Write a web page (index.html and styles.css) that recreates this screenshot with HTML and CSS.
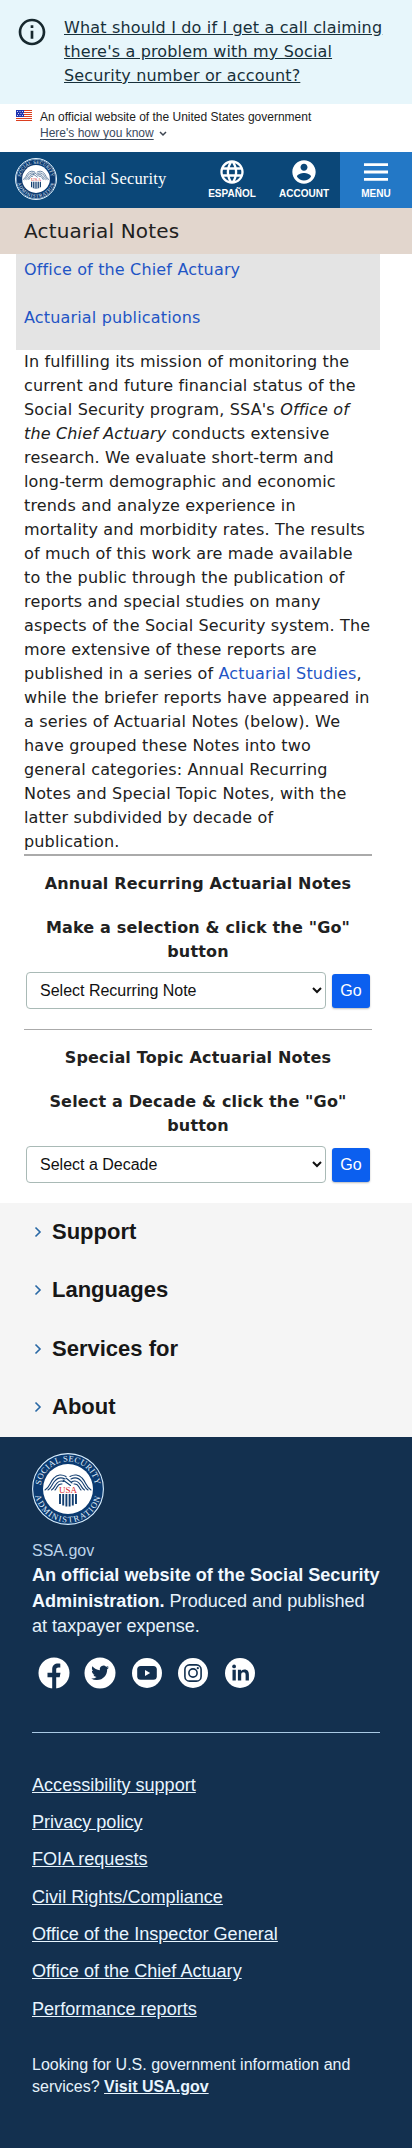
FILE: index.html
```html
<!DOCTYPE html>
<html lang="en">
<head>
<meta charset="utf-8">
<meta name="viewport" content="width=device-width, initial-scale=1">
<title>Actuarial Notes</title>
<link rel="stylesheet" href="styles.css">
</head>
<body>
<svg class="defs" width="0" height="0" aria-hidden="true">
  <defs>
    <path id="arc-top" d="M8.500 36a27.500 27.500 0 0 1 55 0"/>
    <path id="arc-bottom" d="M2.600 36a33.400 33.400 0 0 0 66.800 0"/>
    <symbol id="seal" viewBox="0 0 72 72">
      <circle cx="36" cy="36" r="35.400" fill="#0b3a70" stroke="#d9efff" stroke-width="1.100"/>
      <circle cx="36" cy="36" r="25" fill="#fff"/>
      <text class="seal-ring"><textPath href="#arc-top" startOffset="50%" text-anchor="middle">SOCIAL SECURITY</textPath></text>
      <text class="seal-ring seal-ring-bottom"><textPath href="#arc-bottom" startOffset="50%" text-anchor="middle">ADMINISTRATION</textPath></text>
      <g fill="none" stroke="#123e70" stroke-width="1.100" stroke-linecap="round">
        <path d="M34 23.500c-4-2.500-9-2-12 1.500-4 4-4 9-9 12M33 26c-4-2-8-1-11 3-3 4-2.500 6-6 8M32 28.500c-4-1.500-6 0-8.500 3.500-1.500 2.500-2 4-4 5M30 31c-3-.5-4 1-5 3-.5 1-1 2-2 3"/>
        <path d="M38 23.500c4-2.500 9-2 12 1.500 4 4 4 9 9 12M39 26c4-2 8-1 11 3 3 4 2.500 6 6 8M40 28.500c4-1.500 6 0 8.500 3.500 1.500 2.500 2 4 4 5M42 31c3-.5 4 1 5 3 .5 1 1 2 2 3M31 27l7.500 5.500M34 25l6 5"/>
      </g>
      <text class="seal-usa" x="36" y="39.800" text-anchor="middle">USA</text>
      <path d="M28 41v10M31.200 41v11.500M34.400 41v12.500M37.600 41v12.500M40.800 41v11.500M44 41v10" fill="none" stroke="#123e70" stroke-width="1.900"/>
    </symbol>
  </defs>
</svg>

<aside class="alert">
  <svg class="alert-icon" viewBox="0 0 24 24"><path fill="currentColor" d="M11 7h2v2h-2zm0 4h2v6h-2zm1-9C6.480 2 2 6.480 2 12s4.480 10 10 10 10-4.480 10-10S17.520 2 12 2zm0 18c-4.410 0-8-3.590-8-8s3.590-8 8-8 8 3.590 8 8-3.590 8-8 8z"/></svg>
  <a class="alert-link" href="#">What should I do if I get a call claiming there's a problem with my Social Security number or account?</a>
</aside>

<div class="gov">
  <svg class="flag" viewBox="0 0 16 11"><path fill="#fff" d="M0 0h16v11H0z"/><path stroke="#db3e1f" d="M0 .5h16M0 2.500h16M0 4.500h16M0 6.500h16M0 8.500h16M0 10.500h16"/><path fill="#1e33b1" d="M0 0h8v7H0z"/><path stroke="#fff" stroke-width=".8" stroke-dasharray="1 1.500" d="M1 1.500h7M2 3.500h6M1 5.500h7"/></svg>
  <div>
    <div class="gov-text">An official website of the United States government</div>
    <div class="gov-more"><span>Here's how you know</span><svg width="8" height="6" viewBox="0 0 8 6"><path d="M1 1l3 3 3-3" fill="none" stroke="#3d4551" stroke-width="1.500"/></svg></div>
  </div>
</div>

<header class="header">
  <svg class="header-seal"><use href="#seal"/></svg>
  <span class="brand">Social Security</span>
  <nav class="tools">
    <a class="tool espanol" href="#"><svg viewBox="0 0 24 24"><path fill="currentColor" d="M11.990 2C6.470 2 2 6.480 2 12s4.470 10 9.990 10C17.520 22 22 17.520 22 12S17.520 2 11.990 2zm6.930 6h-2.950c-.32-1.250-.78-2.450-1.380-3.560 1.840.63 3.370 1.910 4.330 3.560zM12 4.040c.83 1.200 1.480 2.530 1.910 3.960h-3.820c.43-1.430 1.080-2.760 1.910-3.960zM4.260 14C4.100 13.360 4 12.690 4 12s.1-1.360.26-2h3.380c-.08.66-.14 1.320-.14 2s.06 1.340.14 2H4.260zm.82 2h2.950c.32 1.250.78 2.450 1.380 3.560-1.840-.63-3.370-1.900-4.330-3.560zm2.950-8H5.080c.96-1.660 2.490-2.930 4.330-3.560C8.810 5.550 8.350 6.750 8.030 8zM12 19.960c-.83-1.200-1.480-2.530-1.910-3.960h3.820c-.43 1.430-1.080 2.760-1.910 3.960zM14.340 14H9.660c-.09-.66-.16-1.320-.16-2s.07-1.350.16-2h4.680c.09.650.16 1.320.16 2s-.07 1.340-.16 2zm.25 5.560c.6-1.110 1.060-2.310 1.380-3.560h2.950c-.96 1.650-2.490 2.930-4.330 3.560zM16.360 14c.08-.66.14-1.320.14-2s-.06-1.340-.14-2h3.380c.16.640.26 1.310.26 2s-.1 1.360-.26 2h-3.380z"/></svg><span>ESPAÑOL</span></a>
    <a class="tool account" href="#"><svg viewBox="0 0 24 24"><path fill="currentColor" d="M12 2C6.480 2 2 6.480 2 12s4.480 10 10 10 10-4.480 10-10S17.520 2 12 2zm0 3c1.660 0 3 1.340 3 3s-1.340 3-3 3-3-1.340-3-3 1.340-3 3-3zm0 14.200c-2.500 0-4.710-1.280-6-3.220.03-1.990 4-3.080 6-3.080 1.990 0 5.970 1.090 6 3.080-1.290 1.940-3.500 3.220-6 3.220z"/></svg><span>ACCOUNT</span></a>
    <a class="tool menu" href="#"><svg viewBox="0 0 24 24"><path fill="currentColor" d="M1.700 4.400h20.600v2.400H1.700zM1.700 10.800h20.600v2.400H1.700zM1.700 17.200h20.600v2.400H1.700z"/></svg><span>MENU</span></a>
  </nav>
</header>

<h1 class="title">Actuarial Notes</h1>

<main>
  <nav class="crumbs">
    <a href="#">Office of the Chief Actuary</a>
    <a href="#">Actuarial publications</a>
  </nav>
  <div class="content">
    <p class="intro">In fulfilling its mission of monitoring the current and future financial status of the Social Security program, SSA's <em>Office of the Chief Actuary</em> conducts extensive research. We evaluate short-term and long-term demographic and economic trends and analyze experience in mortality and morbidity rates. The results of much of this work are made available to the public through the publication of reports and special studies on many aspects of the Social Security system. The more extensive of these reports are published in a series of <a href="#">Actuarial Studies</a>, while the briefer reports have appeared in a series of Actuarial Notes (below). We have grouped these Notes into two general categories: Annual Recurring Notes and Special Topic Notes, with the latter subdivided by decade of publication.</p>
    <section class="notes recurring">
      <h2>Annual Recurring Actuarial Notes</h2>
      <h3>Make a selection &amp; click the "Go" button</h3>
      <form class="picker"><select><option>Select Recurring Note</option></select><button type="button">Go</button></form>
    </section>
    <section class="notes">
      <h2>Special Topic Actuarial Notes</h2>
      <h3>Select a Decade &amp; click the "Go" button</h3>
      <form class="picker"><select><option>Select a Decade</option></select><button type="button">Go</button></form>
    </section>
  </div>
</main>

<div class="accordion">
  <div class="acc-item"><svg viewBox="0 0 8 12"><path d="M1.500 1.500L6 6l-4.500 4.500"/></svg><span>Support</span></div>
  <div class="acc-item"><svg viewBox="0 0 8 12"><path d="M1.500 1.500L6 6l-4.500 4.500"/></svg><span>Languages</span></div>
  <div class="acc-item"><svg viewBox="0 0 8 12"><path d="M1.500 1.500L6 6l-4.500 4.500"/></svg><span>Services for</span></div>
  <div class="acc-item"><svg viewBox="0 0 8 12"><path d="M1.500 1.500L6 6l-4.500 4.500"/></svg><span>About</span></div>
</div>

<footer class="footer">
  <svg class="footer-seal"><use href="#seal"/></svg>
  <div class="site">SSA.gov</div>
  <p class="about"><strong>An official website of the Social Security Administration.</strong> Produced and published at taxpayer expense.</p>
  <div class="social">
    <svg viewBox="0 0 32 32"><circle cx="16" cy="16" r="15.500"/><path class="ink" d="M14.200 32V20.300H9.500v-4.600h4.700v-3.200c0-4.100 2.500-6 5.900-6 1 0 1.800.1 2.200.2v3.900h-1.900c-1.600 0-2.200.7-2.200 2v3.100h4.300l-.8 4.600h-3.500V32z"/></svg>
    <svg viewBox="0 0 32 32"><circle cx="16" cy="16" r="15.500"/><path class="ink" transform="translate(7.200 7) scale(.74)" d="M23.950 4.570a10 10 0 0 1-2.820.77 4.960 4.960 0 0 0 2.160-2.720c-.95.56-2 .96-3.130 1.180a4.920 4.920 0 0 0-8.380 4.480C7.690 8.100 4.070 6.130 1.640 3.160a4.820 4.820 0 0 0-.67 2.480c0 1.710.87 3.210 2.190 4.100a4.900 4.900 0 0 1-2.230-.62v.06a4.920 4.920 0 0 0 3.950 4.830 5 5 0 0 1-2.210.08 4.940 4.940 0 0 0 4.600 3.420A9.870 9.870 0 0 1 0 19.540a13.990 13.990 0 0 0 7.560 2.210c9.050 0 14-7.500 14-13.980 0-.21 0-.42-.02-.63a9.940 9.940 0 0 0 2.410-2.570z"/></svg>
    <svg viewBox="0 0 32 32"><circle cx="16" cy="16" r="15"/><rect class="ink" x="6.200" y="9" width="19.600" height="13.800" rx="3.500"/><path d="M14 12.900v6l5.200-3z"/></svg>
    <svg viewBox="0 0 32 32"><circle cx="16" cy="16" r="15"/><g class="line"><rect x="7.900" y="7.900" width="16.200" height="16.200" rx="4.700"/><circle cx="16" cy="16" r="4.100"/></g><circle class="ink" cx="20.800" cy="11.200" r="1.100"/></svg>
    <svg viewBox="0 0 32 32"><circle cx="16" cy="16" r="15"/><path class="ink" d="M8.500 12.800h3.300v10.600H8.500zM13.900 12.800H17v1.500c.6-1 1.800-1.800 3.400-1.800 3.400 0 4.500 2.200 4.500 5.200v5.700h-3.300v-5.100c0-1.600-.2-3-2.100-3s-2.300 1.300-2.300 2.900v5.200h-3.300z"/><circle class="ink" cx="10.100" cy="9.400" r="1.900"/></svg>
  </div>
  <ul class="links">
    <li><a href="#">Accessibility support</a></li>
    <li><a href="#">Privacy policy</a></li>
    <li><a href="#">FOIA requests</a></li>
    <li><a href="#">Civil Rights/Compliance</a></li>
    <li><a href="#">Office of the Inspector General</a></li>
    <li><a href="#">Office of the Chief Actuary</a></li>
    <li><a href="#">Performance reports</a></li>
  </ul>
  <p class="usa">Looking for U.S. government information and services? <a href="#">Visit USA.gov</a></p>
</footer>
</body>
</html>
```
FILE: styles.css
```css
* { box-sizing: border-box; }
body { margin: 0; width: 412px; background: #fff; color: #212121; font: 16px/24px "DejaVu Sans", sans-serif; }
h1, h2, h3, p, ul { margin: 0; padding: 0; }
a { color: #1f55c5; text-decoration: none; }
.defs { position: absolute; }
.seal-ring { font: 8.500px "Liberation Serif", serif; fill: #e4f3ff; letter-spacing: .3px; }
.seal-ring-bottom { letter-spacing: 1.300px; }
.seal-usa { font: 9px "Liberation Serif", serif; fill: #d8262c; }

.alert { display: flex; height: 104px; padding: 16px; background: #e7f6fb; letter-spacing: .16px; }
.alert-icon { width: 32px; height: 32px; margin-right: 16px; color: #17282e; }
.alert-link { flex: 1; color: #17303a; text-decoration: underline; }

.gov { display: flex; height: 48px; padding: 5px 16px 0; font: 12px/16px "Liberation Sans", sans-serif; color: #1b1b1b; }
.flag { width: 16px; height: 11px; margin: 1px 8px 0 0; }
.gov-more { display: flex; align-items: center; color: #3a4a60; }
.gov-more span { text-decoration: underline; text-underline-offset: 2px; }
.gov-more svg { margin: 2px 0 0 5px; }

.header { display: flex; align-items: center; height: 56px; padding-left: 15px; background: #0b4778; color: #fff; }
.header-seal { width: 42px; height: 42px; margin-top: -2px; border: 1px solid #e6f4ff; border-radius: 50%; }
.brand { margin: -2px 0 0 7px; font: 16.500px/24px "Liberation Serif", serif; letter-spacing: .13px; }
.tools { display: flex; height: 56px; margin-left: auto; font: bold 10px/12px "Liberation Sans", sans-serif; }
.tool { display: flex; flex-direction: column; align-items: center; width: 72px; padding-top: 6px; color: #fff; }
.tool svg { width: 28px; height: 28px; }
.tool span { margin-top: 2px; }
.tool.menu { background: #2378c6; }

.title { height: 46px; padding: 0 24px; background: #e2d6cd; color: #212121; font-size: 20px; font-weight: 400; line-height: 46px; letter-spacing: .16px; }
main { letter-spacing: .16px; }
.crumbs { display: flex; flex-direction: column; gap: 24px; width: 364px; height: 96px; margin-left: 16px; padding: 4px 8px; background: #e4e4e4; }
.content { padding: 0 40px 20px 24px; }
.intro { border-bottom: 2px solid #aaa; height: 506px; width: 348px; }
.notes { width: 348px; padding-top: 16px; text-align: center; }
.recurring { height: 174px; border-bottom: 1px solid #aaa; }
.notes h2, .notes h3 { font-size: 16px; line-height: 24px; font-weight: 700; }
.notes h3 { margin-top: 20px; padding: 0 20px; }
.picker { display: flex; gap: 6px; margin: 8px 0 0 2px; align-items: center; }
.picker select { width: 300px; height: 37px; padding: 0 0 0 9px; border: 1px solid #a9bab6; border-radius: 4px; background: #fff; color: #111; font: 16px "Liberation Sans", sans-serif; }
.picker button { width: 38px; height: 34px; margin-top: 1px; padding: 0; border: 0; border-radius: 3px; background: #0b5fef; color: #fff; font: 16px "Liberation Sans", sans-serif; box-shadow: 0 1px 2px #0004; }

.accordion { height: 234px; background: #f5f5f5; font: bold 22px/58px "Liberation Sans", sans-serif; color: #171717; }
.acc-item { display: flex; align-items: center; gap: 10px; height: 58.300px; padding-left: 34px; }
.acc-item svg { width: 8px; height: 12px; fill: none; stroke: #2868a5; stroke-width: 1.600; }

.footer { height: 711px; padding: 16px 32px 0; background: #13304f; color: #e6f2fb; font: 18.080px/25.500px "Liberation Sans", sans-serif; }
.footer-seal { display: block; width: 72px; height: 72px; }
.site { margin-top: 14px; font-size: 16px; line-height: 24px; color: #bcd4ea; }
.about { width: 349px; }
.about strong { color: #f2f9ff; }
.social { display: flex; gap: 14.500px; width: 348px; height: 93px; padding: 17px 0 0 5.500px; border-bottom: 1px solid #a9c9e4; }
.social svg { width: 32px; height: 32px; fill: #fff; }
.social .ink { fill: #13304f; }
.social .line { fill: none; stroke: #13304f; stroke-width: 1.600; }
.links { margin-top: 40px; list-style: none; }
.links li { height: 37.400px; }
.links a, .usa a { color: #e8f5ff; text-decoration: underline; }
.usa { margin-top: 20px; font-size: 16px; line-height: 22px; }
.usa a { font-weight: 700; }
```
